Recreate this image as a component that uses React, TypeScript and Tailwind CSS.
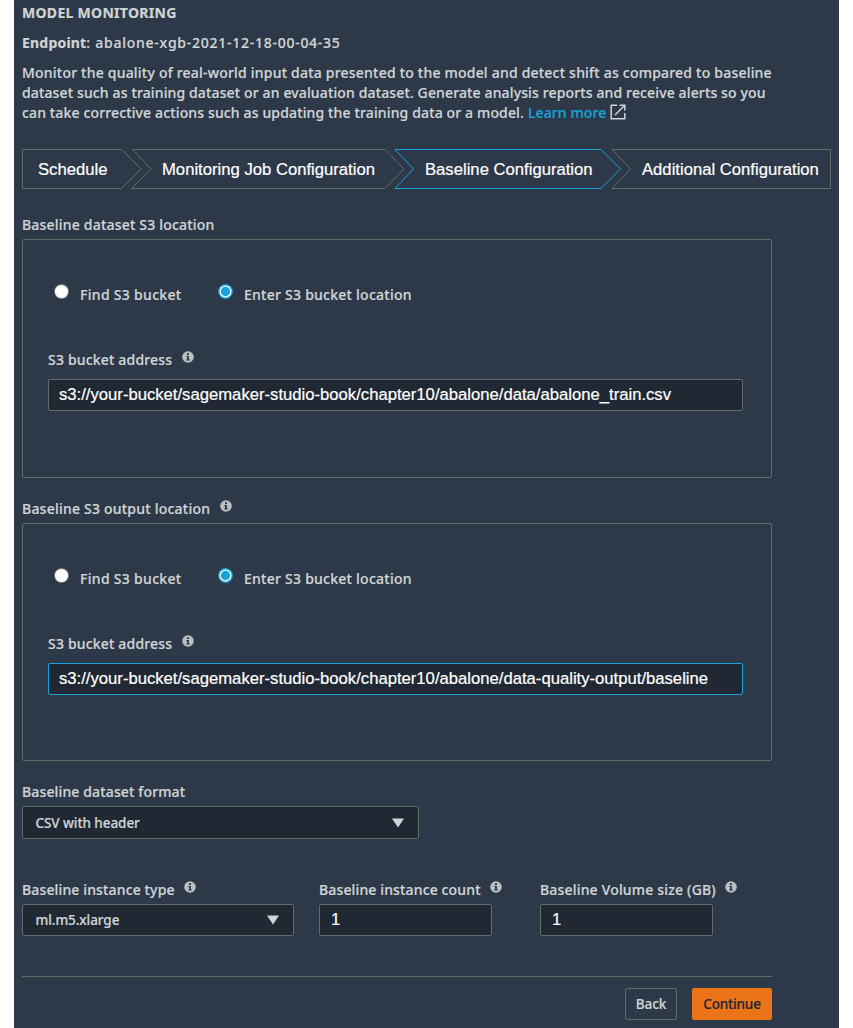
import type { ReactNode } from "react";

function InfoIcon({ className = "" }: { className?: string }) {
  return (
    <svg viewBox="0 0 12 12" className={`h-3 w-3 shrink-0 ${className}`} aria-hidden="true">
      <circle cx="6" cy="6" r="5.8" fill="#b9bfc1" />
      <path d="M5 2.200h2v1.700H5zM4.300 5h2.600v3.600h.9v1H4.200v-1h.9V6h-.8z" fill="#2d3848" />
    </svg>
  );
}

function FieldLabel({ children, info = false, tracking }: { children: ReactNode; info?: boolean; tracking: string }) {
  return (
    <div className="flex h-5 items-start gap-[9.5px] whitespace-nowrap">
      <span className={tracking}>{children}</span>
      {info && <InfoIcon className="mt-px" />}
    </div>
  );
}

function Step({ label, box, outline, width, active = false }: { label: string; box: string; outline: string; width: number; active?: boolean }) {
  return (
    <li className={`relative flex h-10 shrink-0 items-center pt-0.5 font-['Liberation_Sans',sans-serif] text-[16.67px] text-white ${box}`}>
      <svg className="absolute inset-0 h-10 w-full" viewBox={`0 0 ${width} 40`} fill="none" aria-hidden="true">
        <path d={outline} stroke={active ? "#16a3dc" : "#626d68"} />
      </svg>
      <span className="relative whitespace-nowrap">{label}</span>
    </li>
  );
}

function Radio({ checked = false }: { checked?: boolean }) {
  return (
    <svg className="-mt-px h-[15px] w-[15px] shrink-0" viewBox="0 0 15 15" aria-hidden="true">
      <circle cx="7.5" cy="7.5" r="7.4" fill={checked ? "#16a3dc" : "#747a7c"} />
      <circle cx="7.5" cy="7.5" r={checked ? 6 : 6.6} fill="#fff" />
      {checked && <circle cx="7.5" cy="7.5" r="4.7" fill="#16a3dc" />}
    </svg>
  );
}

function BucketPanel({ address, active = false, box }: { address: string; active?: boolean; box: string }) {
  return (
    <section className={`w-[750px] rounded-[2px] border border-[#626d68] pt-[45px] pl-[25px] ${box}`}>
      <div className="flex h-5 pl-1.5">
        <div className="flex w-[164px] gap-[11px]">
          <Radio />
          <span className="whitespace-nowrap tracking-[0.31px]">Find S3 bucket</span>
        </div>
        <div className="flex gap-[11px]">
          <Radio checked />
          <span className="whitespace-nowrap tracking-[0.25px]">Enter S3 bucket location</span>
        </div>
      </div>
      <div className="mt-[45px]">
        <FieldLabel info tracking="tracking-[0.18px]">S3 bucket address</FieldLabel>
      </div>
      <div
        className={`mt-[9px] flex h-8 w-[695px] items-center rounded-[2px] border bg-[#1f2833] pl-2.5 font-['Liberation_Sans',sans-serif] text-[16.67px] text-white ${
          active ? "border-[#16a3dc]" : "border-[#626d68]"
        }`}
      >
        <span className="whitespace-nowrap">{address}</span>
      </div>
    </section>
  );
}

function Select({ value, box }: { value: string; box: string }) {
  return (
    <div className={`flex items-center justify-between rounded-[2px] border border-[#626d68] bg-[#1f2833] pl-[12.5px] text-[13.5px] ${box}`}>
      <span className="tracking-[-0.07px]">{value}</span>
      <svg className="h-2.5 w-3" viewBox="0 0 12 10" aria-hidden="true">
        <path d="M0 .5h12L6 9.500z" fill="#d0d5d6" />
      </svg>
    </div>
  );
}

function NumberBox({ value }: { value: string }) {
  return (
    <div className="flex h-8 w-[173px] items-center rounded-[2px] border border-[#626d68] bg-[#1f2833] pl-[11px] font-['Liberation_Sans',sans-serif] text-[16.67px] text-white">
      {value}
    </div>
  );
}

export default function App() {
  return (
    <div className="h-[1028px] w-[853px] overflow-hidden bg-white pl-3.5">
      <main className="h-full w-[825px] bg-[#2d3848] pt-[3px] pl-2 font-['Noto_Sans',sans-serif] text-[14px] leading-5 font-medium text-[#d0d5d6] [-webkit-text-stroke:0.2px]">
        <h1 className="h-5 font-bold tracking-[0.29px]">MODEL MONITORING</h1>
        <p className="mt-2.5 h-5">
          <b className="tracking-[0.2px]">Endpoint</b>
          <span className="tracking-[0.74px]">: abalone-xgb-2021-12-18-00-04-35</span>
        </p>
        <div className="mt-2.5 whitespace-nowrap">
          <p className="tracking-[0.21px]">Monitor the quality of real-world input data presented to the model and detect shift as compared to baseline</p>
          <p className="tracking-[0.135px]">dataset such as training dataset or an evaluation dataset. Generate analysis reports and receive alerts so you</p>
          <p className="flex">
            <span className="tracking-[0.14px]">can take corrective actions such as updating the training data or a model.</span>
            <span className="ml-1 tracking-[0.1px] text-[#16a3dc]">Learn more</span>
            <svg className="mt-px ml-1 h-4 w-4" viewBox="0 0 16 16" fill="none" stroke="#d0d5d6" strokeWidth="1.5" aria-hidden="true">
              <path d="M7 1.200H1.200v13.600h13.600V9M9.500 1.200h5.300v5.300M14.500 1.500L5 11" />
            </svg>
          </p>
        </div>

        <ol className="mt-[26px] flex">
          <Step label="Schedule" box="w-[120px] pl-4" width={120} outline="M99.500.5H.5v39h99L119 20z" />
          <Step label="Monitoring Job Configuration" box="-ml-[11px] w-[274px] pl-[31px]" width={274} outline="M1.500.5h252.500L273 20 253.500 39.500H.5L20 20z" />
          <Step active label="Baseline Configuration" box="-ml-[11px] w-[228px] pl-[31px]" width={228} outline="M1 .5h206L226.500 20 207 39.500H1L19.500 20z" />
          <Step label="Additional Configuration" box="-ml-[11px] w-[220px] pl-[31px]" width={220} outline="M1 .5h218.500v39H1L19.500 20z" />
        </ol>

        <div className="mt-[26px]">
          <FieldLabel tracking="tracking-[0.2px]">Baseline dataset S3 location</FieldLabel>
        </div>
        <BucketPanel box="mt-1 h-[239px]" address="s3://your-bucket/sagemaker-studio-book/chapter10/abalone/data/abalone_train.csv" />

        <div className="mt-[21px]">
          <FieldLabel info tracking="tracking-[0.22px]">Baseline S3 output location</FieldLabel>
        </div>
        <BucketPanel active box="mt-1 h-[238px]" address="s3://your-bucket/sagemaker-studio-book/chapter10/abalone/data-quality-output/baseline" />

        <div className="mt-[21px]">
          <FieldLabel tracking="tracking-[0.14px]">Baseline dataset format</FieldLabel>
          <Select value="CSV with header" box="mt-1 h-[33px] w-[397px] pr-3.5" />
        </div>

        <div className="mt-[41px] flex">
          <div className="w-[297px]">
            <FieldLabel info tracking="tracking-[0.14px]">Baseline instance type</FieldLabel>
            <Select value="ml.m5.xlarge" box="mt-1 h-8 w-[272px] pr-3.5" />
          </div>
          <div className="w-[221px]">
            <FieldLabel info tracking="tracking-[0.14px]">Baseline instance count</FieldLabel>
            <div className="mt-1">
              <NumberBox value="1" />
            </div>
          </div>
          <div>
            <FieldLabel info tracking="tracking-[0.18px]">Baseline Volume size (GB)</FieldLabel>
            <div className="mt-1">
              <NumberBox value="1" />
            </div>
          </div>
        </div>

        <footer className="mt-10 flex w-[750px] justify-end gap-[15px] border-t border-[#626d68] pt-[11px] text-[13.5px]">
          <button className="h-8 w-[52px] rounded-[2px] border border-[#626d68]">Back</button>
          <button className="h-8 w-20 rounded-[2px] bg-[#eb7318] tracking-[-0.15px] text-[#1f2833]">Continue</button>
        </footer>
      </main>
    </div>
  );
}
